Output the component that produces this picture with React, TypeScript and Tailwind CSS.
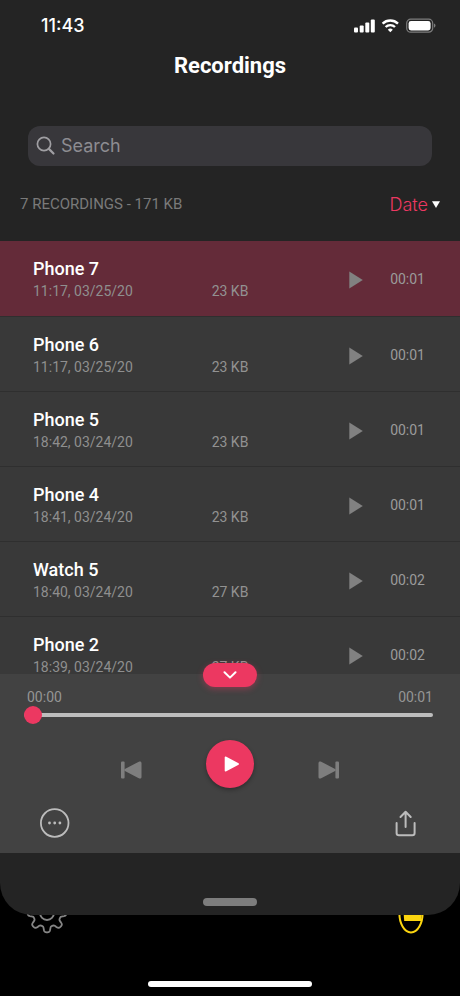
type Recording = { name: string; date: string; size: string; length: string };

const recordings: Recording[] = [
  { name: "Phone 7", date: "11:17, 03/25/20", size: "23 KB", length: "00:01" },
  { name: "Phone 6", date: "11:17, 03/25/20", size: "23 KB", length: "00:01" },
  { name: "Phone 5", date: "18:42, 03/24/20", size: "23 KB", length: "00:01" },
  { name: "Phone 4", date: "18:41, 03/24/20", size: "23 KB", length: "00:01" },
  { name: "Watch 5", date: "18:40, 03/24/20", size: "27 KB", length: "00:02" },
  { name: "Phone 2", date: "18:39, 03/24/20", size: "27 KB", length: "00:02" },
];

// Outline of an eight-toothed cog centred on 21,21.
const cogPath =
  Array.from({ length: 180 }, (_, i) => {
    const a = (i / 180) * Math.PI * 2;
    const r = 16.6 + 2.8 * Math.tanh(2 * Math.cos(8 * a));
    return `${i ? "L" : "M"}${(21 + r * Math.cos(a)).toFixed(2)} ${(21 + r * Math.sin(a)).toFixed(2)}`;
  }).join("") + "Z";

function StatusBar() {
  return (
    <div className="flex h-[50px] shrink-0 items-center justify-between pt-0.5 pr-6 pl-[41px]">
      <span className="font-['Inter',sans-serif] text-lg font-medium text-white">11:43</span>
      <svg width="82" height="16" viewBox="0 0 82 16" fill="#fff" aria-hidden="true">
        <rect x="0" y="9.5" width="4" height="5" rx="1" />
        <rect x="5.7" y="7.5" width="4" height="7" rx="1" />
        <rect x="11.3" y="4.5" width="4" height="10" rx="1" />
        <rect x="16.8" y="1.5" width="4" height="13" rx="1" />
        <g fill="none" stroke="#fff" strokeWidth="2.4">
          <path d="M28.6 5.6a11 11 0 0 1 15.4 0" />
          <path d="M31.6 9a6.8 6.8 0 0 1 9.4 0" />
        </g>
        <path d="M36.3 14.3l-2.5-2.6a3.7 3.7 0 0 1 5 0z" />
        <rect x="52.7" y="1.2" width="26" height="13" rx="4" fill="none" stroke="#7d7d7d" strokeWidth="1.2" />
        <rect x="54.6" y="3" width="22" height="9.4" rx="2.4" />
        <path d="M80 5.6c2 .7 2 3.4 0 4.2z" fill="#7d7d7d" />
      </svg>
    </div>
  );
}

function Row({ item, active }: { item: Recording; active: boolean }) {
  return (
    <li
      className={
        "grid shrink-0 grid-cols-[1fr_auto_1fr] border-b border-[#2f2f2f] px-[33px] pt-4 " +
        (active ? "h-[76px] bg-[#642b39]" : "h-[75px] bg-[#393939]")
      }
    >
      <div>
        <h2 className="text-lg leading-6 font-medium text-white">{item.name}</h2>
        <p className="text-sm leading-5 text-[#8f8f8f]">{item.date}</p>
      </div>
      <p className="pt-6 text-sm leading-5 text-[#929292]">{item.size}</p>
      <div className="flex h-11 items-center justify-end gap-[27px] pr-0.5">
        <button type="button" aria-label={`Play ${item.name}`} className="pt-0.5">
          <svg width="14" height="18" viewBox="0 0 14 18" fill="#818181">
            <path d="M.3.5v17L13.8 9z" />
          </svg>
        </button>
        <span className="text-sm leading-5 text-[#9b9b9b]">{item.length}</span>
      </div>
    </li>
  );
}

function SkipIcon({ className }: { className?: string }) {
  return (
    <svg width="21" height="18" viewBox="0 0 21 18" fill="#7e7e7e" className={className}>
      <rect x="0" y=".5" width="3.6" height="17" rx="1" />
      <path d="M3.900 8.100L17.800.7c1.500-.7 2.700 0 2.700 1.400v13.800c0 1.400-1.200 2.100-2.700 1.400L3.900 9.900c-.9-.5-.9-1.300 0-1.800z" />
    </svg>
  );
}

function Player() {
  return (
    <section aria-label="Player" className="relative bg-[#424242] pt-[14px] pb-[15px]">
      <button
        type="button"
        aria-label="Collapse player"
        className="absolute -top-[11px] left-1/2 flex h-6 w-[54px] -translate-x-1/2 items-center justify-center rounded-full bg-[#ec3861] shadow-[0_2px_6px_rgba(236,56,97,0.4)]"
      >
        <svg width="14" height="8" viewBox="0 0 14 8" fill="none" stroke="#fff" strokeWidth="2" strokeLinecap="round" strokeLinejoin="round">
          <path d="M1.500 1.200L7 6.600l5.500-5.400" />
        </svg>
      </button>
      <div className="flex justify-between px-[27px] text-sm leading-[18px] text-[#959595]">
        <span>00:00</span>
        <span>00:01</span>
      </div>
      <div className="flex pr-[27px] pl-6">
        <input
          type="range"
          aria-label="Position"
          min={0}
          max={100}
          defaultValue={0}
          className="h-[18px] w-full appearance-none bg-transparent [&::-webkit-slider-runnable-track]:h-[4px] [&::-webkit-slider-runnable-track]:rounded-full [&::-webkit-slider-runnable-track]:bg-[#bdbdbd] [&::-webkit-slider-thumb]:-mt-[7px] [&::-webkit-slider-thumb]:size-[18px] [&::-webkit-slider-thumb]:appearance-none [&::-webkit-slider-thumb]:rounded-full [&::-webkit-slider-thumb]:bg-[#ec3861]"
        />
      </div>
      <div className="mt-4 flex items-center justify-center gap-16">
        <button type="button" aria-label="Previous" className="pt-3">
          <SkipIcon />
        </button>
        <button
          type="button"
          aria-label="Play"
          className="flex size-12 items-center justify-center rounded-full bg-[#ec3861] pl-1 shadow-[0_2px_4px_rgba(0,0,0,0.3)]"
        >
          <svg width="16" height="16" viewBox="0 0 16 16" fill="#fff" stroke="#fff" strokeWidth="1.600" strokeLinejoin="round">
            <path d="M1.500 1.300v13.400L14.200 8z" />
          </svg>
        </button>
        <button type="button" aria-label="Next" className="pt-3">
          <SkipIcon className="rotate-180" />
        </button>
      </div>
      <div className="mt-5 flex justify-between px-10">
        <button type="button" aria-label="More">
          <svg width="30" height="30" viewBox="0 0 30 30" fill="#bcbcbc">
            <circle cx="14.700" cy="15" r="13.800" fill="none" stroke="#bcbcbc" strokeWidth="1.800" />
            <circle cx="9.500" cy="15" r="1.400" />
            <circle cx="14.700" cy="15" r="1.400" />
            <circle cx="19.900" cy="15" r="1.400" />
          </svg>
        </button>
        <button type="button" aria-label="Share">
          <svg width="30" height="30" viewBox="0 0 30 30" fill="none" stroke="#bcbcbc" strokeWidth="2" strokeLinecap="round" strokeLinejoin="round">
            <path d="M6.600 15v10q0 2.300 2.300 2.300h13.400q2.300 0 2.300-2.300V15M15.600 19V4.200M10.500 9l5.100-5.200L20.700 9" />
          </svg>
        </button>
      </div>
    </section>
  );
}

export default function App() {
  return (
    <div className="flex h-screen flex-col overflow-hidden bg-black font-['Roboto',sans-serif]">
      <main className="relative z-10 flex min-h-0 flex-1 flex-col overflow-hidden rounded-b-[32px] bg-[#242424]">
        <StatusBar />
        <h1 className="pt-px text-center text-[22px] leading-[30px] font-bold text-white">Recordings</h1>
        <label className="mx-7 mt-[45px] flex h-10 shrink-0 items-center gap-[5px] rounded-xl bg-[#38373b] px-2">
          <svg width="20" height="20" viewBox="0 0 20 20" fill="none" stroke="#a09fa3" strokeWidth="1.700" strokeLinecap="round" aria-hidden="true">
            <circle cx="8" cy="8" r="6.600" />
            <path d="M12.900 12.900l4.600 4.600" strokeWidth="2.200" />
          </svg>
          <input
            type="search"
            aria-label="Search"
            placeholder="Search"
            className="min-w-0 flex-1 bg-transparent font-['Inter',sans-serif] text-lg text-white outline-none placeholder:text-[#8d8c91]"
          />
        </label>
        <div className="flex h-[75px] shrink-0 items-center justify-between px-5 pt-0.5">
          <p className="text-[15px] text-[#7a7a7a]">7 RECORDINGS - 171 KB</p>
          <button type="button" className="flex items-center gap-1 font-['Inter',sans-serif] text-lg font-light text-[#ec3861]">
            Date
            <svg width="8" height="7" viewBox="0 0 8 7" fill="#fff" aria-hidden="true">
              <path d="M0 .2h8L4 7z" />
            </svg>
          </button>
        </div>
        <ul className="flex min-h-0 flex-1 flex-col overflow-hidden bg-[#393939]">
          {recordings.map((item, i) => (
            <Row key={item.name} item={item} active={i === 0} />
          ))}
        </ul>
        <Player />
        <div className="flex h-[62px] shrink-0 items-end justify-center pb-[9px]">
          <div className="h-2 w-[54px] rounded-full bg-[#7d7d7d]" />
        </div>
      </main>
      <footer className="flex h-[81px] shrink-0 flex-col justify-between pb-[9px]">
        <nav className="-mt-[23px] flex justify-between pr-7 pl-[26px]">
          <button type="button" aria-label="Settings">
            <svg width="42" height="42" viewBox="0 0 42 42" fill="none" stroke="#858585" strokeWidth="1.800" strokeLinejoin="round">
              <path d={cogPath} />
              <circle cx="21" cy="21" r="7" />
            </svg>
          </button>
          <button type="button" aria-label="Record">
            <svg width="42" height="42" viewBox="0 0 42 42" fill="none">
              <path d="M9.400 10V21.500C9.400 31 14 40.400 21 40.400S32.600 31 32.600 21.500V10" stroke="#fbd50f" strokeWidth="2" />
              <path d="M13.200 16H32.600L31 29H14.200z" fill="#fbd50f" />
            </svg>
          </button>
        </nav>
        <div className="mx-auto h-[6px] w-[164px] rounded-full bg-white" />
      </footer>
    </div>
  );
}
